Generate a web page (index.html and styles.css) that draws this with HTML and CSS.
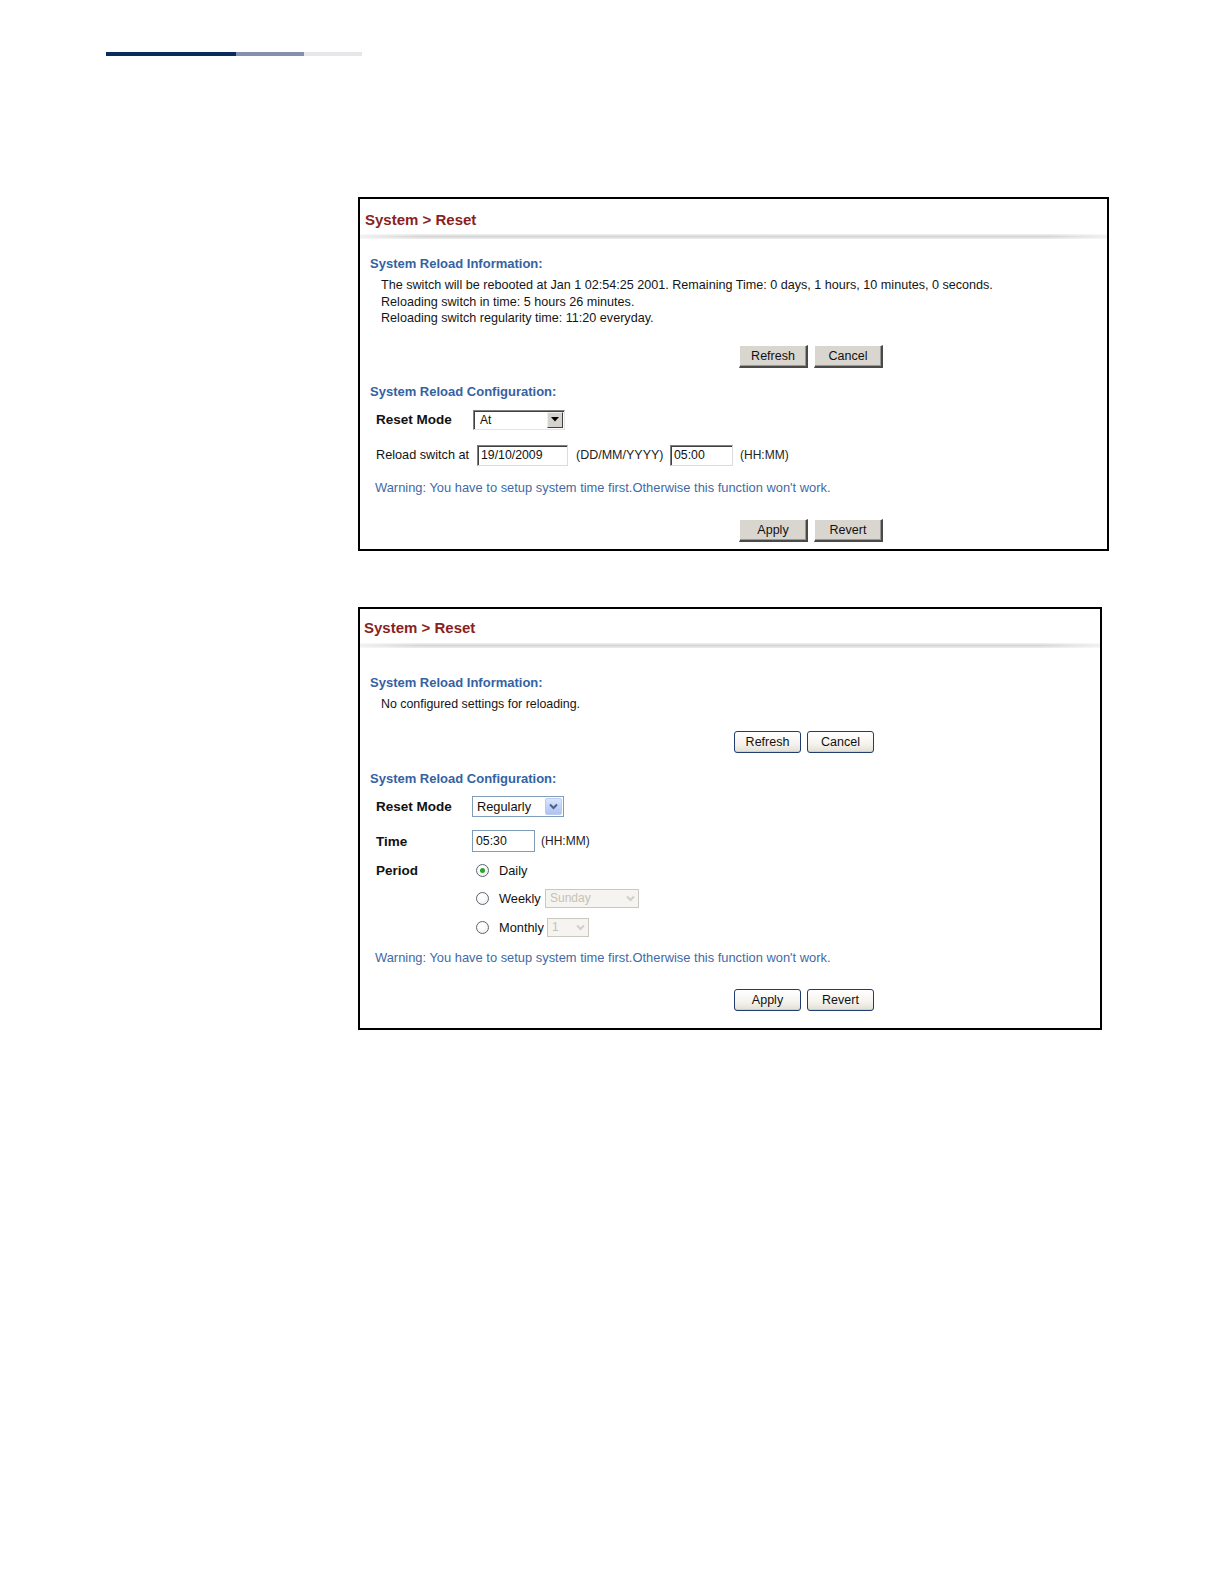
FILE: index.html
```html
<!DOCTYPE html>
<html>
<head>
<meta charset="utf-8">
<title>System &gt; Reset</title>
<link rel="stylesheet" href="styles.css">
</head>
<body>
<div class="topbar"><span class="seg s1"></span><span class="seg s2"></span><span class="seg s3"></span></div>

<div class="panel p1">
  <div class="header"><span class="title">System &gt; Reset</span></div>
  <div class="divider"></div>
  <div class="heading h-info1">System Reload Information:</div>
  <div class="info">
    <div class="line">The switch will be rebooted at Jan 1 02:54:25 2001. Remaining Time: 0 days, 1 hours, 10 minutes, 0 seconds.</div>
    <div class="line">Reloading switch in time: 5 hours 26 minutes.</div>
    <div class="line">Reloading switch regularity time: 11:20 everyday.</div>
  </div>
  <div class="btnrow b1-top"><span class="cbtn">Refresh</span><span class="cbtn">Cancel</span></div>
  <div class="heading h-conf1">System Reload Configuration:</div>
  <div class="frow r-mode1">
    <span class="lbl bold w97">Reset Mode</span>
    <span class="csel"><span class="csel-text">At</span><span class="csel-arrow"><svg width="8" height="5" viewBox="0 0 8 5"><path d="M0 0H8L4 4.5Z" fill="#000"/></svg></span></span>
  </div>
  <div class="frow r-reload">
    <span class="lbl reload w101">Reload switch at</span>
    <span class="cinput w91">19/10/2009</span>
    <span class="hint date">(DD/MM/YYYY)</span>
    <span class="cinput w63">05:00</span>
    <span class="hint ml7">(HH:MM)</span>
  </div>
  <div class="warning w1">Warning: You have to setup system time first.Otherwise this function won't work.</div>
  <div class="btnrow b1-bot"><span class="cbtn">Apply</span><span class="cbtn">Revert</span></div>
</div>

<div class="panel p2">
  <div class="header"><span class="title">System &gt; Reset</span></div>
  <div class="divider"></div>
  <div class="heading h-info2">System Reload Information:</div>
  <div class="info">
    <div class="line">No configured settings for reloading.</div>
  </div>
  <div class="btnrow b2-top"><span class="xbtn">Refresh</span><span class="xbtn">Cancel</span></div>
  <div class="heading h-conf2">System Reload Configuration:</div>
  <div class="frow r-mode2">
    <span class="lbl bold w96">Reset Mode</span>
    <span class="xsel"><span class="xsel-text">Regularly</span><span class="xsel-arrow"><svg width="9" height="7" viewBox="0 0 9 7"><path d="M1 1.5L4.5 5L8 1.5" fill="none" stroke="#4d6185" stroke-width="2"/></svg></span></span>
  </div>
  <div class="frow r-time">
    <span class="lbl bold w96">Time</span>
    <span class="xinput">05:30</span>
    <span class="hint ml6">(HH:MM)</span>
  </div>
  <div class="frow r-period">
    <span class="lbl bold w100">Period</span>
    <span class="radio on"><span class="dot"></span></span>
    <span class="rlabel">Daily</span>
  </div>
  <div class="frow r-weekly">
    <span class="lbl w100"></span>
    <span class="radio"></span>
    <span class="rlabel rw46">Weekly</span>
    <span class="dsel w94"><span class="dsel-text">Sunday</span><span class="dsel-arrow"><svg width="9" height="7" viewBox="0 0 9 7"><path d="M1 1.5L4.5 5L8 1.5" fill="none" stroke="#d0d0c8" stroke-width="2"/></svg></span></span>
  </div>
  <div class="frow r-monthly">
    <span class="lbl w100"></span>
    <span class="radio"></span>
    <span class="rlabel rw48">Monthly</span>
    <span class="dsel w42"><span class="dsel-text">1</span><span class="dsel-arrow"><svg width="9" height="7" viewBox="0 0 9 7"><path d="M1 1.5L4.5 5L8 1.5" fill="none" stroke="#d0d0c8" stroke-width="2"/></svg></span></span>
  </div>
  <div class="warning w2">Warning: You have to setup system time first.Otherwise this function won't work.</div>
  <div class="btnrow b2-bot"><span class="xbtn">Apply</span><span class="xbtn">Revert</span></div>
</div>
</body>
</html>
```

FILE: styles.css
```css
* { box-sizing: border-box; }
html, body { margin: 0; padding: 0; background: #fff; }
body {
  font-family: "Liberation Sans", Arial, sans-serif;
  font-size: 12px;
  color: #111;
  padding-bottom: 40px;
}

.topbar { display: flex; margin: 52px 0 0 106px; height: 4px; }
.seg { display: block; height: 4px; }
.s1 { width: 130px; background: #0b2a5e; }
.s2 { width: 68px; background: #8490ae; }
.s3 { width: 58px; background: #e6e7eb; }

.panel {
  margin-left: 358px;
  border: 2px solid #000;
  background: #fff;
}
.p1 { margin-top: 141px; width: 751px; height: 354px; }
.p2 { margin-top: 56px; width: 744px; height: 423px; }

.header { height: 35px; padding-top: 12px; padding-left: 5px; }
.p2 .header { height: 34px; padding-top: 10px; padding-left: 4px; }
.title {
  display: block;
  line-height: 18px;
  font-size: 15px;
  font-weight: bold;
  color: #8a1f1f;
}

.divider {
  height: 5px;
  background: linear-gradient(to bottom, #f2f2f2 0%, #d6d6d6 50%, #eeeeee 100%);
  -webkit-mask-image: linear-gradient(to right, rgba(0,0,0,0.4) 0%, #000 8%, #000 92%, rgba(0,0,0,0.4) 100%);
  mask-image: linear-gradient(to right, rgba(0,0,0,0.4) 0%, #000 8%, #000 92%, rgba(0,0,0,0.4) 100%);
}

.heading {
  padding-left: 10px;
  line-height: 16px;
  font-size: 13px;
  font-weight: bold;
  color: #3562a2;
}
.h-info1 { margin-top: 17px; }
.h-conf1 { margin-top: 16px; }
.h-info2 { margin-top: 27px; }
.h-conf2 { margin-top: 18px; }

.info { padding-left: 21px; margin-top: 5px; }
.line { line-height: 16.5px; white-space: nowrap; font-size: 12.6px; color: #151515; }
.p2 .line { line-height: 16px; font-size: 12.4px; }

.btnrow { display: flex; gap: 6px; }
.p1 .btnrow { padding-left: 379px; }
.p2 .btnrow { padding-left: 374px; }
.b1-top { margin-top: 18px; }
.b1-bot { margin-top: 23px; }
.b2-top { margin-top: 19px; }
.b2-bot { margin-top: 23px; }

.cbtn {
  display: flex; align-items: center; justify-content: center;
  width: 69px; height: 23px;
  background: #d9d6d0;
  border-top: 1px solid #fff;
  border-left: 1px solid #fff;
  border-right: 2px solid #4a4a4a;
  border-bottom: 2px solid #4a4a4a;
  box-shadow: inset -1px -1px 0 #9a9893;
  font-size: 12.5px;
  color: #111;
}
.xbtn {
  display: flex; align-items: center; justify-content: center;
  width: 67px; height: 22px;
  border: 1px solid #1f3d6e;
  border-radius: 3px;
  background: linear-gradient(to bottom, #ffffff 0%, #f4f3ee 60%, #e2ded3 100%);
  box-shadow: inset 0 -1px 0 #d6d0c2;
  font-size: 12.5px;
  color: #111;
}

.frow { display: flex; align-items: center; padding-left: 16px; white-space: nowrap; }
.lbl { display: block; flex: none; }
.bold { font-weight: bold; font-size: 13.5px; color: #111; }
.reload { font-size: 12.7px; }
.w96 { width: 96px; }
.w97 { width: 97px; }
.w100 { width: 100px; }
.w101 { width: 101px; }
.w91 { width: 91px; }
.w63 { width: 63px; }
.w94 { width: 94px; }
.w42 { width: 42px; }
.ml6 { margin-left: 6px; }
.ml7 { margin-left: 7px; }

.r-mode1 { margin-top: 10px; height: 20px; }
.r-reload { margin-top: 15px; height: 21px; }

.csel {
  display: flex; align-items: center; justify-content: space-between;
  width: 92px; height: 20px;
  border-top: 1px solid #808080; border-left: 1px solid #808080;
  border-right: 1px solid #e4e4e4; border-bottom: 1px solid #e4e4e4;
  box-shadow: inset 1px 1px 0 #404040;
  background: #fff;
  padding: 1px 1px 1px 6px;
}
.csel-text { font-size: 12px; }
.csel-arrow {
  display: flex; align-items: center; justify-content: center;
  width: 16px; height: 16px;
  background: #d6d3ce;
  border-top: 1px solid #f0f0f0; border-left: 1px solid #f0f0f0;
  border-right: 1px solid #404040; border-bottom: 1px solid #404040;
}

.cinput {
  display: flex; align-items: center; height: 21px; flex: none;
  padding-left: 3px;
  border-top: 1px solid #808080; border-left: 1px solid #808080;
  border-right: 1px solid #dcdcdc; border-bottom: 1px solid #dcdcdc;
  box-shadow: inset 1px 1px 0 #404040;
  background: #fff;
  font-size: 12.3px;
}
.hint { display: block; flex: none; color: #222; font-size: 12px; }
.hint.date { width: 102px; padding-left: 8px; font-size: 12.5px; }

.warning {
  padding-left: 15px;
  line-height: 16px;
  font-size: 12.9px;
  color: #3f6aa5;
  white-space: nowrap;
}
.w1 { margin-top: 14px; }
.w2 { margin-top: 13px; }

.r-mode2 { margin-top: 9px; height: 21px; }
.r-time { margin-top: 13px; height: 22px; }
.r-period { margin-top: 8px; height: 20px; }
.r-weekly { margin-top: 8px; height: 20px; }
.r-monthly { margin-top: 9px; height: 20px; }

.xsel {
  display: flex; align-items: center; justify-content: space-between;
  width: 92px; height: 21px;
  border: 1px solid #7f9db9;
  background: #fff;
  padding: 1px 1px 1px 4px;
}
.xsel-text { font-size: 12.8px; }
.xsel-arrow {
  display: flex; align-items: center; justify-content: center;
  width: 17px; height: 17px;
  border: 1px solid #bccbef;
  border-radius: 2px;
  background: linear-gradient(to bottom, #dce6fd 0%, #bccff8 60%, #aec3f2 100%);
}

.xinput {
  display: flex; align-items: center;
  width: 63px; height: 22px;
  border: 1px solid #7f9db9;
  padding-left: 3px;
  background: #fff;
  font-size: 12.3px;
}

.radio {
  display: flex; align-items: center; justify-content: center;
  width: 13px; height: 13px; flex: none;
  border: 1px solid #5a6675;
  border-radius: 50%;
  background: radial-gradient(circle at 40% 35%, #ffffff 30%, #e6e6e0 100%);
  margin-right: 10px;
}
.dot { width: 5px; height: 5px; border-radius: 50%; background: #2aa42a; }
.rlabel { display: block; flex: none; font-size: 12.8px; }
.rw46 { width: 46px; }
.rw48 { width: 48px; }

.dsel {
  display: flex; align-items: center; justify-content: space-between;
  height: 19px;
  border: 1px solid #cbc8bf;
  background: #f5f4f0;
  padding: 0 2px 0 4px;
}
.dsel-text { font-size: 12px; color: #c5c2b6; }
.dsel-arrow { display: flex; align-items: center; width: 12px; height: 14px; justify-content: center; }
```
